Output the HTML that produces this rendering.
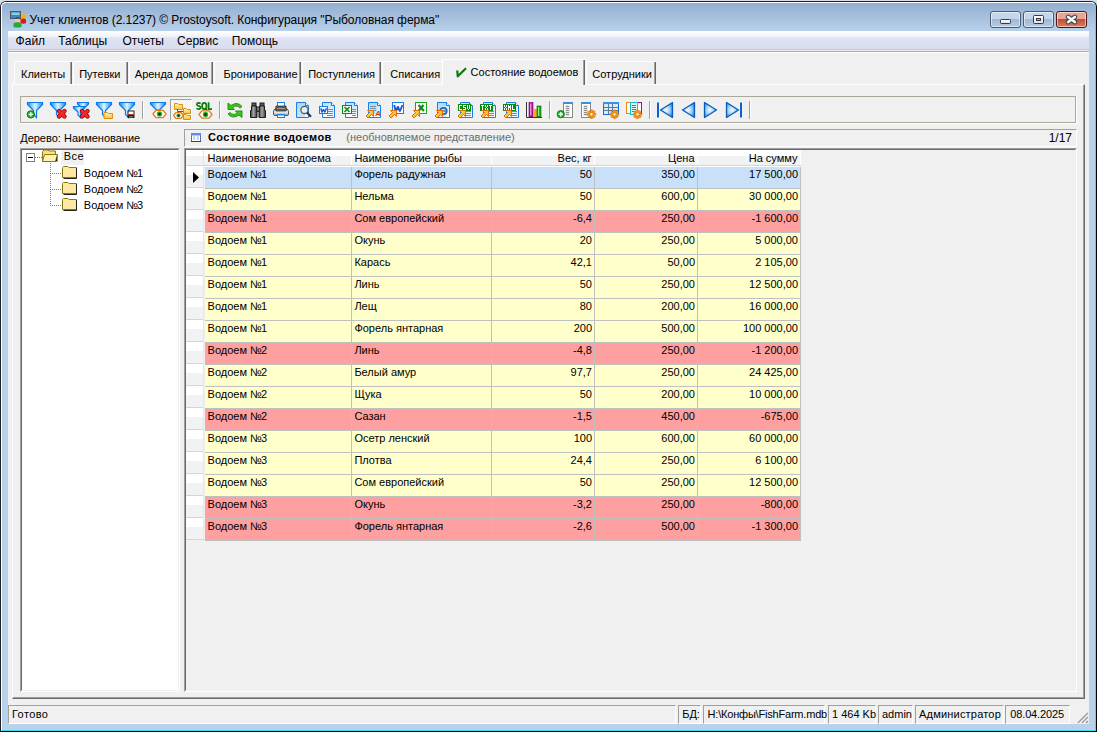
<!DOCTYPE html><html><head><meta charset="utf-8"><style>
*{margin:0;padding:0;box-sizing:border-box}
html,body{width:1097px;height:732px;overflow:hidden;background:#d5deea;font-family:"Liberation Sans",sans-serif;font-size:11px;color:#000}
.a{position:absolute}
.t{position:absolute;white-space:pre;line-height:13px}
svg{position:absolute;overflow:visible}
</style></head><body><div class="a" style="left:0;top:1px;width:1097px;height:731px;background:#b9d1ea;border-radius:6px 6px 0 0;overflow:hidden">
</div>
<div class="a" style="left:2px;top:3px;width:1093px;height:28px;background:linear-gradient(#93afd0,#b8d0ea);border-radius:4px 4px 0 0"></div>
<div class="a" style="left:0;top:1px;width:1097px;height:731px;border:1px solid #222;border-right-color:#000;border-bottom-color:#000;border-radius:6px 6px 0 0"></div>
<div class="a" style="left:1px;top:2px;width:1095px;height:729px;border:1px solid #fdfdfd;border-right-color:#3ae0f0;border-bottom-color:#3ae0f0;border-radius:5px 5px 0 0;border-right-width:1px"></div>
<div class="a" style="left:8px;top:31px;width:1081px;height:693px;background:#f0f0f0"></div>
<div class="a" style="left:8px;top:31px;width:1081px;height:18px;background:linear-gradient(#ffffff 0px,#fbfbfd 2px,#eef0f8 6px,#dfe3f2 7px,#d8ddf0 18px)"></div>
<div class="a" style="left:8px;top:49px;width:1081px;height:1px;background:#bfc6da"></div>
<div class="a" style="left:8px;top:51px;width:1081px;height:1px;background:#aca899"></div>
<div class="a" style="left:8px;top:52px;width:1081px;height:1px;background:#ffffff"></div>
<div class="t" style="left:29.5px;top:13px;font-size:12px;line-height:15px;color:#000;letter-spacing:-0.06px">Учет клиентов (2.1237) © Prostoysoft. Конфигурация "Рыболовная ферма"</div>
<div class="t" style="left:15.6px;top:34px;font-size:12px;line-height:15px">Файл</div>
<div class="t" style="left:58.2px;top:34px;font-size:12px;line-height:15px">Таблицы</div>
<div class="t" style="left:122.5px;top:34px;font-size:12px;line-height:15px">Отчеты</div>
<div class="t" style="left:177.1px;top:34px;font-size:12px;line-height:15px">Сервис</div>
<div class="t" style="left:231.7px;top:34px;font-size:12px;line-height:15px">Помощь</div>
<div class="a" style="left:12px;top:84px;width:1073px;height:615px;border-left:1px solid #fff;border-top:1px solid #fff;border-right:1px solid #696969;border-bottom:1px solid #696969"></div>
<div class="a" style="left:13px;top:85px;width:1071px;height:613px;border-right:1px solid #a0a0a0;border-bottom:1px solid #a0a0a0"></div>
<div class="a" style="left:14px;top:61px;width:58px;height:23px;border-left:1px solid #fff;border-top:1px solid #fff"></div>
<div class="a" style="left:71px;top:62px;width:1px;height:22px;background:#696969"></div>
<div class="a" style="left:70px;top:62px;width:1px;height:22px;background:#a0a0a0"></div>
<div class="t" style="left:21px;top:68px">Клиенты</div>
<div class="a" style="left:73px;top:61px;width:55px;height:23px;border-left:1px solid #fff;border-top:1px solid #fff"></div>
<div class="a" style="left:127px;top:62px;width:1px;height:22px;background:#696969"></div>
<div class="a" style="left:126px;top:62px;width:1px;height:22px;background:#a0a0a0"></div>
<div class="t" style="left:79.2px;top:68px">Путевки</div>
<div class="a" style="left:129px;top:61px;width:84px;height:23px;border-left:1px solid #fff;border-top:1px solid #fff"></div>
<div class="a" style="left:212px;top:62px;width:1px;height:22px;background:#696969"></div>
<div class="a" style="left:211px;top:62px;width:1px;height:22px;background:#a0a0a0"></div>
<div class="t" style="left:134.8px;top:68px">Аренда домов</div>
<div class="a" style="left:214px;top:61px;width:87px;height:23px;border-left:1px solid #fff;border-top:1px solid #fff"></div>
<div class="a" style="left:300px;top:62px;width:1px;height:22px;background:#696969"></div>
<div class="a" style="left:299px;top:62px;width:1px;height:22px;background:#a0a0a0"></div>
<div class="t" style="left:223.5px;top:68px">Бронирование</div>
<div class="a" style="left:302px;top:61px;width:79px;height:23px;border-left:1px solid #fff;border-top:1px solid #fff"></div>
<div class="a" style="left:380px;top:62px;width:1px;height:22px;background:#696969"></div>
<div class="a" style="left:379px;top:62px;width:1px;height:22px;background:#a0a0a0"></div>
<div class="t" style="left:308.2px;top:68px">Поступления</div>
<div class="a" style="left:382px;top:61px;width:60px;height:23px;border-left:1px solid #fff;border-top:1px solid #fff"></div>
<div class="t" style="left:390.3px;top:68px">Списания</div>
<div class="a" style="left:586px;top:61px;width:70px;height:23px;border-left:1px solid #fff;border-top:1px solid #fff"></div>
<div class="a" style="left:655px;top:62px;width:1px;height:22px;background:#696969"></div>
<div class="a" style="left:654px;top:62px;width:1px;height:22px;background:#a0a0a0"></div>
<div class="t" style="left:592.3px;top:68px">Сотрудники</div>
<div class="a" style="left:442px;top:59px;width:143px;height:27px;background:#f0f0f0;border-top:1px solid #fff"></div>
<div class="a" style="left:442px;top:60px;width:1px;height:25px;background:#fff"></div>
<div class="a" style="left:584px;top:60px;width:1px;height:25px;background:#696969"></div>
<div class="a" style="left:583px;top:60px;width:1px;height:25px;background:#a0a0a0"></div>
<div class="t" style="left:470.6px;top:66px">Состояние водоемов</div>
<svg style="left:455px;top:67px" width="12" height="12" viewBox="0 0 12 12"><path d="M2.2 3.5 L2.8 9.3 L11 1.2" fill="none" stroke="#0a7a0a" stroke-width="2.2" stroke-linejoin="round"/></svg>
<div class="a" style="left:20px;top:96px;width:1057px;height:28px;border:1px solid #fff"></div>
<div class="a" style="left:20px;top:96px;width:1056px;height:27px;border:1px solid #aca899"></div>
<div class="t" style="left:20.2px;top:132px">Дерево: Наименование</div>
<div class="a" style="left:20px;top:148px;width:160px;height:544px;background:#fff;border-left:1px solid #a0a0a0;border-top:1px solid #a0a0a0;border-right:1px solid #fff;border-bottom:1px solid #fff"></div>
<div class="a" style="left:21px;top:149px;width:158px;height:542px;border-left:1px solid #696969;border-top:1px solid #696969;border-right:1px solid #f0f0f0;border-bottom:1px solid #f0f0f0"></div>
<div class="a" style="left:184px;top:129px;width:893px;height:18px;border-left:1px solid #a0a0a0;border-top:1px solid #a0a0a0;border-right:1px solid #fff;border-bottom:1px solid #fff"></div>
<div class="t" style="left:207.9px;top:131px;font-weight:bold;letter-spacing:0.45px">Состояние водоемов</div>
<div class="t" style="left:346.3px;top:131px;color:#6d6d6d">(необновляемое представление)</div>
<div class="t" style="right:25px;top:131px;font-size:12px;line-height:15px">1/17</div>
<div class="a" style="left:184px;top:148px;width:893px;height:544px;background:#f0f0f0;border-left:1px solid #a0a0a0;border-top:1px solid #a0a0a0;border-right:1px solid #fff;border-bottom:1px solid #fff"></div>
<div class="a" style="left:185px;top:149px;width:891px;height:542px;border-left:1px solid #696969;border-top:1px solid #696969;border-right:1px solid #f0f0f0;border-bottom:1px solid #f0f0f0"></div>
<div class="a" style="left:8px;top:705px;width:668px;height:19px;border-left:1px solid #a0a0a0;border-top:1px solid #a0a0a0;border-right:1px solid #fff;border-bottom:1px solid #fff"></div>
<div class="t" style="left:12px;top:708px;letter-spacing:0.4px">Готово</div>
<div class="a" style="left:678px;top:705px;width:23px;height:19px;border-left:1px solid #a0a0a0;border-top:1px solid #a0a0a0;border-right:1px solid #fff;border-bottom:1px solid #fff"></div>
<div class="t" style="left:682.2px;top:708px;letter-spacing:0">БД:</div>
<div class="a" style="left:703px;top:705px;width:122px;height:19px;border-left:1px solid #a0a0a0;border-top:1px solid #a0a0a0;border-right:1px solid #fff;border-bottom:1px solid #fff"></div>
<div class="t" style="left:707.6px;top:708px;letter-spacing:-0.2px">H:\Конфы\FishFarm.mdb</div>
<div class="a" style="left:828px;top:705px;width:48px;height:19px;border-left:1px solid #a0a0a0;border-top:1px solid #a0a0a0;border-right:1px solid #fff;border-bottom:1px solid #fff"></div>
<div class="t" style="left:832px;top:708px;letter-spacing:0">1 464 Kb</div>
<div class="a" style="left:878px;top:705px;width:35px;height:19px;border-left:1px solid #a0a0a0;border-top:1px solid #a0a0a0;border-right:1px solid #fff;border-bottom:1px solid #fff"></div>
<div class="t" style="left:882px;top:708px;letter-spacing:0">admin</div>
<div class="a" style="left:915px;top:705px;width:89px;height:19px;border-left:1px solid #a0a0a0;border-top:1px solid #a0a0a0;border-right:1px solid #fff;border-bottom:1px solid #fff"></div>
<div class="t" style="left:919px;top:708px;letter-spacing:0.2px">Администратор</div>
<div class="a" style="left:1005px;top:705px;width:65px;height:19px;border-left:1px solid #a0a0a0;border-top:1px solid #a0a0a0;border-right:1px solid #fff;border-bottom:1px solid #fff"></div>
<div class="t" style="left:1010.3px;top:708px;letter-spacing:-0.15px">08.04.2025</div>
<div class="a" style="left:186px;top:150px;width:615px;height:15px;background:linear-gradient(#ffffff 0,#ffffff 6px,#f1f2f4 6px,#f1f2f4 15px)"></div>
<div class="a" style="left:186px;top:165px;width:615px;height:1px;background:#d5d5d5"></div>
<div class="a" style="left:205px;top:166px;width:596px;height:1px;background:#ffffff"></div>
<div class="a" style="left:186px;top:166px;width:18px;height:21px;background:linear-gradient(#ffffff 0,#ffffff 9px,#f1f2f4 9px,#f1f2f4 21px)"></div>
<div class="a" style="left:186px;top:187px;width:18px;height:1px;background:#d5d5d5"></div>
<div class="a" style="left:186px;top:188px;width:18px;height:21px;background:linear-gradient(#ffffff 0,#ffffff 9px,#f1f2f4 9px,#f1f2f4 21px)"></div>
<div class="a" style="left:186px;top:209px;width:18px;height:1px;background:#d5d5d5"></div>
<div class="a" style="left:186px;top:210px;width:18px;height:21px;background:linear-gradient(#ffffff 0,#ffffff 9px,#f1f2f4 9px,#f1f2f4 21px)"></div>
<div class="a" style="left:186px;top:231px;width:18px;height:1px;background:#d5d5d5"></div>
<div class="a" style="left:186px;top:232px;width:18px;height:21px;background:linear-gradient(#ffffff 0,#ffffff 9px,#f1f2f4 9px,#f1f2f4 21px)"></div>
<div class="a" style="left:186px;top:253px;width:18px;height:1px;background:#d5d5d5"></div>
<div class="a" style="left:186px;top:254px;width:18px;height:21px;background:linear-gradient(#ffffff 0,#ffffff 9px,#f1f2f4 9px,#f1f2f4 21px)"></div>
<div class="a" style="left:186px;top:275px;width:18px;height:1px;background:#d5d5d5"></div>
<div class="a" style="left:186px;top:276px;width:18px;height:21px;background:linear-gradient(#ffffff 0,#ffffff 9px,#f1f2f4 9px,#f1f2f4 21px)"></div>
<div class="a" style="left:186px;top:297px;width:18px;height:1px;background:#d5d5d5"></div>
<div class="a" style="left:186px;top:298px;width:18px;height:21px;background:linear-gradient(#ffffff 0,#ffffff 9px,#f1f2f4 9px,#f1f2f4 21px)"></div>
<div class="a" style="left:186px;top:319px;width:18px;height:1px;background:#d5d5d5"></div>
<div class="a" style="left:186px;top:320px;width:18px;height:21px;background:linear-gradient(#ffffff 0,#ffffff 9px,#f1f2f4 9px,#f1f2f4 21px)"></div>
<div class="a" style="left:186px;top:341px;width:18px;height:1px;background:#d5d5d5"></div>
<div class="a" style="left:186px;top:342px;width:18px;height:21px;background:linear-gradient(#ffffff 0,#ffffff 9px,#f1f2f4 9px,#f1f2f4 21px)"></div>
<div class="a" style="left:186px;top:363px;width:18px;height:1px;background:#d5d5d5"></div>
<div class="a" style="left:186px;top:364px;width:18px;height:21px;background:linear-gradient(#ffffff 0,#ffffff 9px,#f1f2f4 9px,#f1f2f4 21px)"></div>
<div class="a" style="left:186px;top:385px;width:18px;height:1px;background:#d5d5d5"></div>
<div class="a" style="left:186px;top:386px;width:18px;height:21px;background:linear-gradient(#ffffff 0,#ffffff 9px,#f1f2f4 9px,#f1f2f4 21px)"></div>
<div class="a" style="left:186px;top:407px;width:18px;height:1px;background:#d5d5d5"></div>
<div class="a" style="left:186px;top:408px;width:18px;height:21px;background:linear-gradient(#ffffff 0,#ffffff 9px,#f1f2f4 9px,#f1f2f4 21px)"></div>
<div class="a" style="left:186px;top:429px;width:18px;height:1px;background:#d5d5d5"></div>
<div class="a" style="left:186px;top:430px;width:18px;height:21px;background:linear-gradient(#ffffff 0,#ffffff 9px,#f1f2f4 9px,#f1f2f4 21px)"></div>
<div class="a" style="left:186px;top:451px;width:18px;height:1px;background:#d5d5d5"></div>
<div class="a" style="left:186px;top:452px;width:18px;height:21px;background:linear-gradient(#ffffff 0,#ffffff 9px,#f1f2f4 9px,#f1f2f4 21px)"></div>
<div class="a" style="left:186px;top:473px;width:18px;height:1px;background:#d5d5d5"></div>
<div class="a" style="left:186px;top:474px;width:18px;height:21px;background:linear-gradient(#ffffff 0,#ffffff 9px,#f1f2f4 9px,#f1f2f4 21px)"></div>
<div class="a" style="left:186px;top:495px;width:18px;height:1px;background:#d5d5d5"></div>
<div class="a" style="left:186px;top:496px;width:18px;height:21px;background:linear-gradient(#ffffff 0,#ffffff 9px,#f1f2f4 9px,#f1f2f4 21px)"></div>
<div class="a" style="left:186px;top:517px;width:18px;height:1px;background:#d5d5d5"></div>
<div class="a" style="left:186px;top:518px;width:18px;height:21px;background:linear-gradient(#ffffff 0,#ffffff 9px,#f1f2f4 9px,#f1f2f4 21px)"></div>
<div class="a" style="left:186px;top:539px;width:18px;height:1px;background:#d5d5d5"></div>
<div class="a" style="left:205px;top:167px;width:595px;height:21px;background:#c8e1f9"></div>
<div class="a" style="left:205px;top:188px;width:596px;height:1px;background:#c0c0c0"></div>
<div class="a" style="left:205px;top:189px;width:595px;height:21px;background:#ffffcc"></div>
<div class="a" style="left:205px;top:210px;width:596px;height:1px;background:#c0c0c0"></div>
<div class="a" style="left:205px;top:211px;width:595px;height:21px;background:#ffa0a0"></div>
<div class="a" style="left:205px;top:232px;width:596px;height:1px;background:#c0c0c0"></div>
<div class="a" style="left:205px;top:233px;width:595px;height:21px;background:#ffffcc"></div>
<div class="a" style="left:205px;top:254px;width:596px;height:1px;background:#c0c0c0"></div>
<div class="a" style="left:205px;top:255px;width:595px;height:21px;background:#ffffcc"></div>
<div class="a" style="left:205px;top:276px;width:596px;height:1px;background:#c0c0c0"></div>
<div class="a" style="left:205px;top:277px;width:595px;height:21px;background:#ffffcc"></div>
<div class="a" style="left:205px;top:298px;width:596px;height:1px;background:#c0c0c0"></div>
<div class="a" style="left:205px;top:299px;width:595px;height:21px;background:#ffffcc"></div>
<div class="a" style="left:205px;top:320px;width:596px;height:1px;background:#c0c0c0"></div>
<div class="a" style="left:205px;top:321px;width:595px;height:21px;background:#ffffcc"></div>
<div class="a" style="left:205px;top:342px;width:596px;height:1px;background:#c0c0c0"></div>
<div class="a" style="left:205px;top:343px;width:595px;height:21px;background:#ffa0a0"></div>
<div class="a" style="left:205px;top:364px;width:596px;height:1px;background:#c0c0c0"></div>
<div class="a" style="left:205px;top:365px;width:595px;height:21px;background:#ffffcc"></div>
<div class="a" style="left:205px;top:386px;width:596px;height:1px;background:#c0c0c0"></div>
<div class="a" style="left:205px;top:387px;width:595px;height:21px;background:#ffffcc"></div>
<div class="a" style="left:205px;top:408px;width:596px;height:1px;background:#c0c0c0"></div>
<div class="a" style="left:205px;top:409px;width:595px;height:21px;background:#ffa0a0"></div>
<div class="a" style="left:205px;top:430px;width:596px;height:1px;background:#c0c0c0"></div>
<div class="a" style="left:205px;top:431px;width:595px;height:21px;background:#ffffcc"></div>
<div class="a" style="left:205px;top:452px;width:596px;height:1px;background:#c0c0c0"></div>
<div class="a" style="left:205px;top:453px;width:595px;height:21px;background:#ffffcc"></div>
<div class="a" style="left:205px;top:474px;width:596px;height:1px;background:#c0c0c0"></div>
<div class="a" style="left:205px;top:475px;width:595px;height:21px;background:#ffffcc"></div>
<div class="a" style="left:205px;top:496px;width:596px;height:1px;background:#c0c0c0"></div>
<div class="a" style="left:205px;top:497px;width:595px;height:21px;background:#ffa0a0"></div>
<div class="a" style="left:205px;top:518px;width:596px;height:1px;background:#c0c0c0"></div>
<div class="a" style="left:205px;top:519px;width:595px;height:21px;background:#ffa0a0"></div>
<div class="a" style="left:205px;top:540px;width:596px;height:1px;background:#c0c0c0"></div>
<div class="a" style="left:203px;top:150px;width:1px;height:389px;background:#e6e6e6"></div>
<div class="a" style="left:351px;top:150px;width:1px;height:15px;background:#ffffff"></div>
<div class="a" style="left:351px;top:167px;width:1px;height:374px;background:#c0c0c0"></div>
<div class="a" style="left:491px;top:150px;width:1px;height:15px;background:#ffffff"></div>
<div class="a" style="left:491px;top:167px;width:1px;height:374px;background:#c0c0c0"></div>
<div class="a" style="left:594px;top:150px;width:1px;height:15px;background:#ffffff"></div>
<div class="a" style="left:594px;top:167px;width:1px;height:374px;background:#c0c0c0"></div>
<div class="a" style="left:697px;top:150px;width:1px;height:15px;background:#ffffff"></div>
<div class="a" style="left:697px;top:167px;width:1px;height:374px;background:#c0c0c0"></div>
<div class="a" style="left:800px;top:150px;width:1px;height:15px;background:#ffffff"></div>
<div class="a" style="left:800px;top:167px;width:1px;height:374px;background:#c0c0c0"></div>
<div class="t" style="left:207.6px;top:151.6px">Наименование водоема</div>
<div class="t" style="left:354.4px;top:151.6px">Наименование рыбы</div>
<div class="t" style="right:505.5px;top:151.6px">Вес, кг</div>
<div class="t" style="right:402.5px;top:151.6px">Цена</div>
<div class="t" style="right:299.5px;top:151.6px">На сумму</div>
<div class="t" style="left:207.6px;top:167.5px">Водоем <span style=letter-spacing:-1px>№</span>1</div>
<div class="t" style="left:354.4px;top:167.5px">Форель радужная</div>
<div class="t" style="right:505px;top:167.5px">50</div>
<div class="t" style="right:402px;top:167.5px">350,00</div>
<div class="t" style="right:299px;top:167.5px">17 500,00</div>
<div class="t" style="left:207.6px;top:189.5px">Водоем <span style=letter-spacing:-1px>№</span>1</div>
<div class="t" style="left:354.4px;top:189.5px">Нельма</div>
<div class="t" style="right:505px;top:189.5px">50</div>
<div class="t" style="right:402px;top:189.5px">600,00</div>
<div class="t" style="right:299px;top:189.5px">30 000,00</div>
<div class="t" style="left:207.6px;top:211.5px">Водоем <span style=letter-spacing:-1px>№</span>1</div>
<div class="t" style="left:354.4px;top:211.5px">Сом европейский</div>
<div class="t" style="right:505px;top:211.5px">-6,4</div>
<div class="t" style="right:402px;top:211.5px">250,00</div>
<div class="t" style="right:299px;top:211.5px">-1 600,00</div>
<div class="t" style="left:207.6px;top:233.5px">Водоем <span style=letter-spacing:-1px>№</span>1</div>
<div class="t" style="left:354.4px;top:233.5px">Окунь</div>
<div class="t" style="right:505px;top:233.5px">20</div>
<div class="t" style="right:402px;top:233.5px">250,00</div>
<div class="t" style="right:299px;top:233.5px">5 000,00</div>
<div class="t" style="left:207.6px;top:255.5px">Водоем <span style=letter-spacing:-1px>№</span>1</div>
<div class="t" style="left:354.4px;top:255.5px">Карась</div>
<div class="t" style="right:505px;top:255.5px">42,1</div>
<div class="t" style="right:402px;top:255.5px">50,00</div>
<div class="t" style="right:299px;top:255.5px">2 105,00</div>
<div class="t" style="left:207.6px;top:277.5px">Водоем <span style=letter-spacing:-1px>№</span>1</div>
<div class="t" style="left:354.4px;top:277.5px">Линь</div>
<div class="t" style="right:505px;top:277.5px">50</div>
<div class="t" style="right:402px;top:277.5px">250,00</div>
<div class="t" style="right:299px;top:277.5px">12 500,00</div>
<div class="t" style="left:207.6px;top:299.5px">Водоем <span style=letter-spacing:-1px>№</span>1</div>
<div class="t" style="left:354.4px;top:299.5px">Лещ</div>
<div class="t" style="right:505px;top:299.5px">80</div>
<div class="t" style="right:402px;top:299.5px">200,00</div>
<div class="t" style="right:299px;top:299.5px">16 000,00</div>
<div class="t" style="left:207.6px;top:321.5px">Водоем <span style=letter-spacing:-1px>№</span>1</div>
<div class="t" style="left:354.4px;top:321.5px">Форель янтарная</div>
<div class="t" style="right:505px;top:321.5px">200</div>
<div class="t" style="right:402px;top:321.5px">500,00</div>
<div class="t" style="right:299px;top:321.5px">100 000,00</div>
<div class="t" style="left:207.6px;top:343.5px">Водоем <span style=letter-spacing:-1px>№</span>2</div>
<div class="t" style="left:354.4px;top:343.5px">Линь</div>
<div class="t" style="right:505px;top:343.5px">-4,8</div>
<div class="t" style="right:402px;top:343.5px">250,00</div>
<div class="t" style="right:299px;top:343.5px">-1 200,00</div>
<div class="t" style="left:207.6px;top:365.5px">Водоем <span style=letter-spacing:-1px>№</span>2</div>
<div class="t" style="left:354.4px;top:365.5px">Белый амур</div>
<div class="t" style="right:505px;top:365.5px">97,7</div>
<div class="t" style="right:402px;top:365.5px">250,00</div>
<div class="t" style="right:299px;top:365.5px">24 425,00</div>
<div class="t" style="left:207.6px;top:387.5px">Водоем <span style=letter-spacing:-1px>№</span>2</div>
<div class="t" style="left:354.4px;top:387.5px">Щука</div>
<div class="t" style="right:505px;top:387.5px">50</div>
<div class="t" style="right:402px;top:387.5px">200,00</div>
<div class="t" style="right:299px;top:387.5px">10 000,00</div>
<div class="t" style="left:207.6px;top:409.5px">Водоем <span style=letter-spacing:-1px>№</span>2</div>
<div class="t" style="left:354.4px;top:409.5px">Сазан</div>
<div class="t" style="right:505px;top:409.5px">-1,5</div>
<div class="t" style="right:402px;top:409.5px">450,00</div>
<div class="t" style="right:299px;top:409.5px">-675,00</div>
<div class="t" style="left:207.6px;top:431.5px">Водоем <span style=letter-spacing:-1px>№</span>3</div>
<div class="t" style="left:354.4px;top:431.5px">Осетр ленский</div>
<div class="t" style="right:505px;top:431.5px">100</div>
<div class="t" style="right:402px;top:431.5px">600,00</div>
<div class="t" style="right:299px;top:431.5px">60 000,00</div>
<div class="t" style="left:207.6px;top:453.5px">Водоем <span style=letter-spacing:-1px>№</span>3</div>
<div class="t" style="left:354.4px;top:453.5px">Плотва</div>
<div class="t" style="right:505px;top:453.5px">24,4</div>
<div class="t" style="right:402px;top:453.5px">250,00</div>
<div class="t" style="right:299px;top:453.5px">6 100,00</div>
<div class="t" style="left:207.6px;top:475.5px">Водоем <span style=letter-spacing:-1px>№</span>3</div>
<div class="t" style="left:354.4px;top:475.5px">Сом европейский</div>
<div class="t" style="right:505px;top:475.5px">50</div>
<div class="t" style="right:402px;top:475.5px">250,00</div>
<div class="t" style="right:299px;top:475.5px">12 500,00</div>
<div class="t" style="left:207.6px;top:497.5px">Водоем <span style=letter-spacing:-1px>№</span>3</div>
<div class="t" style="left:354.4px;top:497.5px">Окунь</div>
<div class="t" style="right:505px;top:497.5px">-3,2</div>
<div class="t" style="right:402px;top:497.5px">250,00</div>
<div class="t" style="right:299px;top:497.5px">-800,00</div>
<div class="t" style="left:207.6px;top:519.5px">Водоем <span style=letter-spacing:-1px>№</span>3</div>
<div class="t" style="left:354.4px;top:519.5px">Форель янтарная</div>
<div class="t" style="right:505px;top:519.5px">-2,6</div>
<div class="t" style="right:402px;top:519.5px">500,00</div>
<div class="t" style="right:299px;top:519.5px">-1 300,00</div>
<svg style="left:193px;top:172px" width="7" height="12" viewBox="0 0 7 12"><path d="M0 0 L6 5.5 L0 11 Z" fill="#000"/></svg>
<div class="a" style="left:990px;top:11px;width:31px;height:17px;border:1px solid #4e5a6e;border-radius:3px;background:linear-gradient(#c4d6eb 0,#c4d6eb 7px,#9fb8d5 7px,#b5cbe4 15px);box-shadow:inset 0 0 0 1px rgba(255,255,255,0.55)"></div>
<div class="a" style="left:1023px;top:11px;width:31px;height:17px;border:1px solid #4e5a6e;border-radius:3px;background:linear-gradient(#c4d6eb 0,#c4d6eb 7px,#9fb8d5 7px,#b5cbe4 15px);box-shadow:inset 0 0 0 1px rgba(255,255,255,0.55)"></div>
<div class="a" style="left:1056px;top:11px;width:31px;height:17px;border:1px solid #481620;border-radius:3px;background:linear-gradient(#e9a493 0,#e9a493 7px,#c4492b 7px,#dc7d62 15px);box-shadow:inset 0 0 0 1px rgba(255,255,255,0.55)"></div>
<div class="a" style="left:1000px;top:19px;width:11px;height:5px;background:linear-gradient(#ffffff,#e2e2e2);border:1px solid #333a48;border-radius:1.5px"></div>
<div class="a" style="left:1033px;top:15px;width:11px;height:9px;background:linear-gradient(#ffffff,#e2e2e2);border:1px solid #333a48;border-radius:1.5px"></div>
<div class="a" style="left:1036px;top:18px;width:5px;height:3px;background:#9fbad6;border:1px solid #333a48"></div>
<svg style="left:1065px;top:14px" width="13" height="11" viewBox="0 0 13 11"><path d="M3.2 3 L9.8 8 M9.8 3 L3.2 8" stroke="#3b4256" stroke-width="4.8" stroke-linecap="round"/><path d="M3.2 3 L9.8 8 M9.8 3 L3.2 8" stroke="#f6f6f6" stroke-width="2.8" stroke-linecap="round"/></svg>
<svg style="left:10px;top:11px" width="17" height="17" viewBox="0 0 17 17">
<rect x="0.5" y="0.5" width="10" height="7" fill="#3a86d8" stroke="#555" stroke-width="1"/>
<rect x="1.5" y="1.5" width="8" height="2.5" fill="#7fd0e8"/>
<circle cx="13.5" cy="5.5" r="2.6" fill="#f0b020"/>
<path d="M10.5 8.5 Q13.5 6.5 16 8.5 L16 12 Q13.5 13.5 10.5 12 Z" fill="#d81c1c"/>
<circle cx="7.5" cy="9" r="2.6" fill="#f3c8a0"/>
<path d="M5 7.5 Q7.5 5 10 7.5 L9.5 8 Q7.5 7 5.5 8 Z" fill="#222"/>
<path d="M3.5 12.5 Q7.5 10 11.5 12.5 L11.5 16 Q7.5 17 3.5 16 Z" fill="#22aa33"/>
</svg>
<svg style="left:1077px;top:712px" width="12" height="12" viewBox="0 0 12 12">
<path d="M11 1 L1 11 M11 5 L5 11 M11 9 L9 11" stroke="#9a9a9a" stroke-width="1.6"/>
<path d="M11.8 1.8 L1.8 11.8 M11.8 5.8 L5.8 11.8" stroke="#fff" stroke-width="0.8"/>
</svg>
<svg style="left:191px;top:133px" width="10" height="9" viewBox="0 0 10 9">
<rect x="0.5" y="0.5" width="9" height="8" fill="#fff" stroke="#4d74b8" stroke-width="1"/>
<rect x="0" y="0" width="10" height="2.5" fill="#5b8ee6"/>
<rect x="0" y="8" width="10" height="1" fill="#2c4474"/>
<path d="M2 4 H4.3 M5.7 4 H8 M2 6 H4.3 M5.7 6 H8" stroke="#9fb0d0" stroke-width="1"/>
</svg>
<svg width="0" height="0" style="position:absolute">
<defs>
<linearGradient id="gf" x1="0" y1="0" x2="1" y2="0"><stop offset="0" stop-color="#1a8cf0"/><stop offset="0.5" stop-color="#def4ff"/><stop offset="1" stop-color="#1a8cf0"/></linearGradient>
<linearGradient id="gdoc" x1="0" y1="0" x2="0" y2="1"><stop offset="0" stop-color="#bfe0fa"/><stop offset="1" stop-color="#ffffff"/></linearGradient>
<radialGradient id="gred" cx="0.4" cy="0.35" r="0.7"><stop offset="0" stop-color="#ff9a9a"/><stop offset="0.5" stop-color="#f01818"/><stop offset="1" stop-color="#a00000"/></radialGradient>
<linearGradient id="gfold" x1="0" y1="0" x2="0" y2="1"><stop offset="0" stop-color="#fff4b8"/><stop offset="1" stop-color="#f7c23a"/></linearGradient>
<linearGradient id="garr" x1="0" y1="0" x2="1" y2="1"><stop offset="0" stop-color="#ffe860"/><stop offset="1" stop-color="#f8a010"/></linearGradient>
<linearGradient id="gprn" x1="0" y1="0" x2="0" y2="1"><stop offset="0" stop-color="#f8f8f8"/><stop offset="0.6" stop-color="#e0e0e0"/><stop offset="1" stop-color="#8a8a8a"/></linearGradient>
<linearGradient id="gbin" x1="0" y1="0" x2="1" y2="0"><stop offset="0" stop-color="#303030"/><stop offset="0.45" stop-color="#a8a8a8"/><stop offset="1" stop-color="#303030"/></linearGradient>
<radialGradient id="gnav" cx="0.45" cy="0.5" r="0.6"><stop offset="0" stop-color="#f4fbff"/><stop offset="0.55" stop-color="#9dd2f8"/><stop offset="1" stop-color="#2a8ae0"/></radialGradient>
</defs></svg>
<svg style="left:27px;top:102px" width="16" height="16" viewBox="0 0 16 16"><path d="M0.5 0.5 H15.5 V2.5 L9.5 8.5 V15.5 L6.5 12.5 V8.5 L0.5 2.5 Z" fill="url(#gf)" stroke="#0a7ae8" stroke-width="1.2"/><circle cx="3.8" cy="12.4" r="3.6" fill="#18c018" stroke="#0a7a0a" stroke-width="1"/><path d="M1.5999999999999996 12.4 H6.0 M3.8 10.2 V14.600000000000001" stroke="#fff" stroke-width="1.4"/></svg>
<svg style="left:50px;top:102px" width="16" height="16" viewBox="0 0 16 16"><path d="M0.5 0.5 H15.5 V2.5 L9.5 8.5 V15.5 L6.5 12.5 V8.5 L0.5 2.5 Z" fill="url(#gf)" stroke="#0a7ae8" stroke-width="1.2"/><path d="M9 9 L14.5 14.5 M14.5 9 L9 14.5" stroke="#a00000" stroke-width="4.4" stroke-linecap="round"/><path d="M9 9 L14.5 14.5 M14.5 9 L9 14.5" stroke="#f42a2a" stroke-width="2.6" stroke-linecap="round"/></svg>
<svg style="left:73px;top:102px" width="16" height="16" viewBox="0 0 16 16"><path d="M4.5 0.5 H15.5 V2 L11 6.5 H9 L4.5 2 Z" fill="url(#gf)" stroke="#0a7ae8" stroke-width="1.2"/><path d="M0.5 4.5 H11.5 V6 L7.5 10 V15.5 L5 13 V10 L0.5 6 Z" fill="url(#gf)" stroke="#0a7ae8" stroke-width="1.2"/><path d="M9 9 L14.5 14.5 M14.5 9 L9 14.5" stroke="#a00000" stroke-width="4.4" stroke-linecap="round"/><path d="M9 9 L14.5 14.5 M14.5 9 L9 14.5" stroke="#f42a2a" stroke-width="2.6" stroke-linecap="round"/></svg>
<svg style="left:96px;top:102px" width="16" height="16" viewBox="0 0 16 16"><path d="M0.5 0.5 H15.5 V2.5 L9.5 8.5 V15.5 L6.5 12.5 V8.5 L0.5 2.5 Z" fill="url(#gf)" stroke="#0a7ae8" stroke-width="1.2"/><path d="M8.0 10.5 h3.4000000000000004 l1 1 h4.1 v5 h-8.5 z" fill="url(#gfold)" stroke="#e09010" stroke-width="1"/></svg>
<svg style="left:119px;top:102px" width="16" height="16" viewBox="0 0 16 16"><path d="M0.5 0.5 H15.5 V2.5 L9.5 8.5 V15.5 L6.5 12.5 V8.5 L0.5 2.5 Z" fill="url(#gf)" stroke="#0a7ae8" stroke-width="1.2"/><rect x="8.5" y="8.5" width="7" height="7.5" fill="#222" /><rect x="9.5" y="9.5" width="5" height="3" fill="#fff"/><rect x="9.5" y="12" width="5" height="1" fill="#c83010"/><rect x="10.5" y="14" width="1" height="1.5" fill="#bbb"/><rect x="12.5" y="14" width="1" height="1.5" fill="#bbb"/></svg>
<div class="a" style="left:142px;top:101px;width:1px;height:18px;background:#a0a0a0"></div><div class="a" style="left:143px;top:101px;width:1px;height:18px;background:#fff"></div>
<div class="a" style="left:219px;top:101px;width:1px;height:18px;background:#a0a0a0"></div><div class="a" style="left:220px;top:101px;width:1px;height:18px;background:#fff"></div>
<div class="a" style="left:549px;top:101px;width:1px;height:18px;background:#a0a0a0"></div><div class="a" style="left:550px;top:101px;width:1px;height:18px;background:#fff"></div>
<div class="a" style="left:649px;top:101px;width:1px;height:18px;background:#a0a0a0"></div><div class="a" style="left:650px;top:101px;width:1px;height:18px;background:#fff"></div>
<div class="a" style="left:749px;top:101px;width:1px;height:18px;background:#a0a0a0"></div><div class="a" style="left:750px;top:101px;width:1px;height:18px;background:#fff"></div>
<svg style="left:150px;top:102px" width="16" height="16" viewBox="0 0 16 16"><path d="M0.5 0.5 H15.5 V2 L9.5 8 H6.5 L0.5 2 Z" fill="url(#gf)" stroke="#0a7ae8" stroke-width="1.2"/><path d="M3.0 12 L5.925 8.4 H13.075 L16.0 12 L13.075 15.6 H5.925 Z" fill="#fff" stroke="#e47a1c" stroke-width="1.3" stroke-linejoin="round"/><circle cx="9.5" cy="12" r="2.7" fill="#22b422"/><circle cx="9.5" cy="12" r="1.22" fill="#1a1a1a"/></svg>
<div class="a" style="left:170px;top:99px;width:22px;height:22px;border-left:1px solid #a0a0a0;border-top:1px solid #a0a0a0;border-right:1px solid #fff;border-bottom:1px solid #fff;background:repeating-conic-gradient(#ffffff 0 25%,#ececec 0 50%) 0 0/2px 2px"></div>
<svg style="left:173px;top:101px" width="18" height="18" viewBox="0 0 18 18"><path d="M1.5 2.5 h3.2 l1 1 h3.8 v5 h-8 z" fill="url(#gfold)" stroke="#e09010" stroke-width="1"/><path d="M4.5 8 V10.5 H10" stroke="#505860" stroke-width="1" fill="none"/><path d="M10.5 7.5 h2.8000000000000003 l1 1 h3.2 v4 h-7 z" fill="url(#gfold)" stroke="#e09010" stroke-width="1"/><path d="M10.5 13.5 h2.8000000000000003 l1 1 h3.2 v4 h-7 z" fill="url(#gfold)" stroke="#e09010" stroke-width="1"/><path d="M0.7000000000000002 14.5 L2.86 11.7 H8.14 L10.3 14.5 L8.14 17.3 H2.86 Z" fill="#fff" stroke="#e47a1c" stroke-width="1.3" stroke-linejoin="round"/><circle cx="5.5" cy="14.5" r="2.1" fill="#22b422"/><circle cx="5.5" cy="14.5" r="0.95" fill="#1a1a1a"/></svg>
<svg style="left:196px;top:102px" width="17" height="16" viewBox="0 0 17 16"><g fill="none" stroke="#0a7a0a" stroke-width="1.7"><path d="M4.6 1.6 Q3.8 0.9 2.6 0.9 Q0.9 0.9 0.9 2.4 Q0.9 3.6 2.6 3.9 Q4.5 4.3 4.5 5.6 Q4.5 7.1 2.6 7.1 Q1.3 7.1 0.6 6.3"/><ellipse cx="8.3" cy="4" rx="2.2" ry="3.1"/><path d="M9.3 6.2 L11 8"/><path d="M12.6 0.2 V7.1 H16"/></g><path d="M3.0 12.5 L5.925 8.9 H13.075 L16.0 12.5 L13.075 16.1 H5.925 Z" fill="#fff" stroke="#e47a1c" stroke-width="1.3" stroke-linejoin="round"/><circle cx="9.5" cy="12.5" r="2.7" fill="#22b422"/><circle cx="9.5" cy="12.5" r="1.22" fill="#1a1a1a"/></svg>
<svg style="left:227px;top:102px" width="16" height="16" viewBox="0 0 16 16"><path d="M1 1 L1 7.5 L7.5 7.5 L5.5 5.5 Q10 2.5 13 6 L15 4.5 Q10.5 -1 4 3.5 Z" fill="#38c818" stroke="#1a8a0a" stroke-width="0.9"/><path d="M15 15.5 L15 9 L8.5 9 L10.5 11 Q6 14 3 10.5 L1 12 Q5.5 17.5 12 13 Z" fill="#38c818" stroke="#1a8a0a" stroke-width="0.9"/></svg>
<svg style="left:250px;top:102px" width="16" height="16" viewBox="0 0 16 16"><path d="M6.5 5 H9.5 V9.5 H6.5 Z" fill="#7a7a7a" stroke="#1e1e1e" stroke-width="1"/><rect x="2" y="1" width="4" height="3" fill="#5a5a5a" stroke="#1e1e1e" stroke-width="1"/><rect x="10" y="1" width="4" height="3" fill="#5a5a5a" stroke="#1e1e1e" stroke-width="1"/><path d="M1.5 4 H6.5 V8.5 H7 V15.5 H0.5 V8.5 H1.5 Z" fill="url(#gbin)" stroke="#1e1e1e" stroke-width="1" stroke-linejoin="round"/><path d="M9.5 4 H14.5 V8.5 H15.5 V15.5 H9 V8.5 H9.5 Z" fill="url(#gbin)" stroke="#1e1e1e" stroke-width="1" stroke-linejoin="round"/></svg>
<svg style="left:273px;top:102px" width="16" height="16" viewBox="0 0 16 16"><rect x="4.5" y="0.5" width="7" height="5" fill="#fff" stroke="#1480e8"/><path d="M0.5 10 Q0.5 7 2.5 7 H13.5 Q15.5 7 15.5 10 V12.5 Q15.5 13.5 14 13.5 H2 Q0.5 13.5 0.5 12.5 Z" fill="url(#gprn)" stroke="#555" stroke-width="1"/><path d="M3 4 H13 L13.5 8 Q13.5 9 12.5 9 H3.5 Q2.5 9 2.5 8 Z" fill="#5a5a5a" stroke="#3a3a3a" stroke-width="0.8"/><rect x="4" y="6" width="8" height="1" fill="#9a9a9a"/><rect x="4.5" y="12.5" width="7" height="3" fill="#fff" stroke="#1480e8"/><rect x="5" y="13" width="6" height="1" fill="#bbb"/></svg>
<svg style="left:296px;top:102px" width="16" height="16" viewBox="0 0 16 16"><path d="M0.5 0.5 H9.5 L12.5 3.5 V15.5 H0.5 Z" fill="url(#gdoc)" stroke="#1480e8" stroke-width="1"/><path d="M9.5 0.5 V3.5 H12.5" fill="#fff" stroke="#1480e8" stroke-width="1"/><rect x="1" y="1" width="8" height="14" fill="#a8d4f4" opacity="0.6"/><circle cx="8.5" cy="8" r="3.6" fill="#dff0fa" stroke="#555" stroke-width="1.2"/><path d="M11 10.5 L15 14.7" stroke="#333" stroke-width="2"/></svg>
<svg style="left:319px;top:102px" width="16" height="16" viewBox="0 0 16 16"><path d="M3.5 0.5 H12.5 L15.5 3.5 V15.5 H3.5 Z" fill="url(#gdoc)" stroke="#1480e8" stroke-width="1"/><path d="M12.5 0.5 V3.5 H15.5" fill="#fff" stroke="#1480e8" stroke-width="1"/><path d="M8 7.5 H14" stroke="#6a90b0" stroke-width="1"/><path d="M8 9.5 H14" stroke="#6a90b0" stroke-width="1"/><path d="M8 11.5 H14" stroke="#6a90b0" stroke-width="1"/><path d="M8 13.5 H14" stroke="#6a90b0" stroke-width="1"/><rect x="0.5" y="4.5" width="8" height="7" fill="#fff" stroke="#1480e8"/><path d="M1.8 6.3 L2.9 10.3 L4.5 7.3 L5.8 10.3 L7.5 6.3" fill="none" stroke="#1a5ad0" stroke-width="1.4" stroke-linejoin="bevel"/></svg>
<svg style="left:342px;top:102px" width="16" height="16" viewBox="0 0 16 16"><path d="M3.5 0.5 H12.5 L15.5 3.5 V15.5 H3.5 Z" fill="url(#gdoc)" stroke="#1480e8" stroke-width="1"/><path d="M12.5 0.5 V3.5 H15.5" fill="#fff" stroke="#1480e8" stroke-width="1"/><path d="M10 7.5 H14" stroke="#6a90b0" stroke-width="1"/><path d="M10 9.5 H14" stroke="#6a90b0" stroke-width="1"/><path d="M10 11.5 H14" stroke="#6a90b0" stroke-width="1"/><path d="M10 13.5 H14" stroke="#6a90b0" stroke-width="1"/><rect x="0.5" y="3.5" width="9" height="8" fill="#fff" stroke="#0a8a10"/><path d="M2.5 5 L7.5 10 M7.5 5 L2.5 10" stroke="#0a8a10" stroke-width="1.6"/></svg>
<svg style="left:365px;top:102px" width="16" height="16" viewBox="0 0 16 16"><path d="M3.5 0.5 H12.5 L15.5 3.5 V15.5 H3.5 Z" fill="url(#gdoc)" stroke="#1480e8" stroke-width="1"/><path d="M12.5 0.5 V3.5 H15.5" fill="#fff" stroke="#1480e8" stroke-width="1"/><rect x="4" y="1" width="8" height="11" fill="#a8d4f4" opacity="0.55"/><path d="M5 4.5 H11" stroke="#6a90b0" stroke-width="1"/><path d="M5 6.5 H11" stroke="#6a90b0" stroke-width="1"/><path d="M5 8.5 H11" stroke="#6a90b0" stroke-width="1"/><text x="13" y="13.5" font-family="Liberation Sans" font-style="italic" font-weight="bold" font-size="7.5" fill="#d03010" text-anchor="middle">A</text><path d="M2.5 8.5 H8.5 V14.5 L6.5 12.5 L3 16 L1 14 L4.5 10.5 Z" fill="url(#garr)" stroke="#e86a00" stroke-width="1" stroke-linejoin="round"/></svg>
<svg style="left:388px;top:102px" width="16" height="16" viewBox="0 0 16 16"><rect x="4.5" y="0.5" width="11" height="11" fill="#fff" stroke="#1480e8"/><path d="M6.2 3 L7.8 9.5 L10 4.5 L11.8 9.5 L14.5 3" fill="none" stroke="#1a5ad0" stroke-width="1.9" stroke-linejoin="bevel"/><path d="M2.5 8.5 H8.5 V14.5 L6.5 12.5 L3 16 L1 14 L4.5 10.5 Z" fill="url(#garr)" stroke="#e86a00" stroke-width="1" stroke-linejoin="round"/></svg>
<svg style="left:411px;top:102px" width="16" height="16" viewBox="0 0 16 16"><rect x="4.5" y="0.5" width="11" height="11" fill="#fff" stroke="#18a818"/><path d="M7.5 3 L13 9 M12.5 3 L7.5 9" stroke="#108a10" stroke-width="2.2"/><path d="M2.5 8.5 H8.5 V14.5 L6.5 12.5 L3 16 L1 14 L4.5 10.5 Z" fill="url(#garr)" stroke="#e86a00" stroke-width="1" stroke-linejoin="round"/></svg>
<svg style="left:434px;top:102px" width="16" height="16" viewBox="0 0 16 16"><path d="M3.5 0.5 H12.5 L15.5 3.5 V15.5 H3.5 Z" fill="url(#gdoc)" stroke="#1480e8" stroke-width="1"/><path d="M12.5 0.5 V3.5 H15.5" fill="#fff" stroke="#1480e8" stroke-width="1"/><rect x="4" y="1" width="8" height="14" fill="#a8d4f4" opacity="0.5"/><circle cx="9.5" cy="9" r="3.2" fill="none" stroke="#2a6ab0" stroke-width="1.8"/><path d="M6.8 9 H12.3" stroke="#2a6ab0" stroke-width="1.2"/><path d="M2.5 8.5 H8.5 V14.5 L6.5 12.5 L3 16 L1 14 L4.5 10.5 Z" fill="url(#garr)" stroke="#e86a00" stroke-width="1" stroke-linejoin="round"/></svg>
<svg style="left:457px;top:102px" width="16" height="16" viewBox="0 0 16 16"><path d="M3.5 0.5 H12.5 L15.5 3.5 V15.5 H3.5 Z" fill="url(#gdoc)" stroke="#1480e8" stroke-width="1"/><path d="M12.5 0.5 V3.5 H15.5" fill="#fff" stroke="#1480e8" stroke-width="1"/><path d="M8 9.5 H14" stroke="#6a90b0" stroke-width="1"/><path d="M8 11.5 H14" stroke="#6a90b0" stroke-width="1"/><path d="M8 13.5 H14" stroke="#6a90b0" stroke-width="1"/><rect x="1" y="2" width="13" height="7" fill="#0a8a10"/><rect x="2" y="3" width="1" height="1" fill="#fff"/><rect x="3" y="3" width="1" height="1" fill="#fff"/><rect x="4" y="3" width="1" height="1" fill="#fff"/><rect x="2" y="4" width="1" height="1" fill="#fff"/><rect x="2" y="5" width="1" height="1" fill="#fff"/><rect x="2" y="6" width="1" height="1" fill="#fff"/><rect x="2" y="7" width="1" height="1" fill="#fff"/><rect x="3" y="7" width="1" height="1" fill="#fff"/><rect x="4" y="7" width="1" height="1" fill="#fff"/><rect x="6" y="3" width="1" height="1" fill="#fff"/><rect x="7" y="3" width="1" height="1" fill="#fff"/><rect x="8" y="3" width="1" height="1" fill="#fff"/><rect x="6" y="4" width="1" height="1" fill="#fff"/><rect x="6" y="5" width="1" height="1" fill="#fff"/><rect x="7" y="5" width="1" height="1" fill="#fff"/><rect x="8" y="5" width="1" height="1" fill="#fff"/><rect x="8" y="6" width="1" height="1" fill="#fff"/><rect x="6" y="7" width="1" height="1" fill="#fff"/><rect x="7" y="7" width="1" height="1" fill="#fff"/><rect x="8" y="7" width="1" height="1" fill="#fff"/><rect x="10" y="3" width="1" height="1" fill="#fff"/><rect x="12" y="3" width="1" height="1" fill="#fff"/><rect x="10" y="4" width="1" height="1" fill="#fff"/><rect x="12" y="4" width="1" height="1" fill="#fff"/><rect x="10" y="5" width="1" height="1" fill="#fff"/><rect x="12" y="5" width="1" height="1" fill="#fff"/><rect x="10" y="6" width="1" height="1" fill="#fff"/><rect x="12" y="6" width="1" height="1" fill="#fff"/><rect x="11" y="7" width="1" height="1" fill="#fff"/><path d="M2.5 8.5 H8.5 V14.5 L6.5 12.5 L3 16 L1 14 L4.5 10.5 Z" fill="url(#garr)" stroke="#e86a00" stroke-width="1" stroke-linejoin="round"/></svg>
<svg style="left:480px;top:102px" width="16" height="16" viewBox="0 0 16 16"><path d="M3.5 0.5 H12.5 L15.5 3.5 V15.5 H3.5 Z" fill="url(#gdoc)" stroke="#1480e8" stroke-width="1"/><path d="M12.5 0.5 V3.5 H15.5" fill="#fff" stroke="#1480e8" stroke-width="1"/><path d="M8 9.5 H14" stroke="#6a90b0" stroke-width="1"/><path d="M8 11.5 H14" stroke="#6a90b0" stroke-width="1"/><path d="M8 13.5 H14" stroke="#6a90b0" stroke-width="1"/><rect x="0" y="2" width="13" height="7" fill="#0a8a10"/><rect x="1" y="3" width="1" height="1" fill="#fff"/><rect x="2" y="3" width="1" height="1" fill="#fff"/><rect x="3" y="3" width="1" height="1" fill="#fff"/><rect x="2" y="4" width="1" height="1" fill="#fff"/><rect x="2" y="5" width="1" height="1" fill="#fff"/><rect x="2" y="6" width="1" height="1" fill="#fff"/><rect x="2" y="7" width="1" height="1" fill="#fff"/><rect x="5" y="3" width="1" height="1" fill="#fff"/><rect x="7" y="3" width="1" height="1" fill="#fff"/><rect x="5" y="4" width="1" height="1" fill="#fff"/><rect x="7" y="4" width="1" height="1" fill="#fff"/><rect x="6" y="5" width="1" height="1" fill="#fff"/><rect x="5" y="6" width="1" height="1" fill="#fff"/><rect x="7" y="6" width="1" height="1" fill="#fff"/><rect x="5" y="7" width="1" height="1" fill="#fff"/><rect x="7" y="7" width="1" height="1" fill="#fff"/><rect x="9" y="3" width="1" height="1" fill="#fff"/><rect x="10" y="3" width="1" height="1" fill="#fff"/><rect x="11" y="3" width="1" height="1" fill="#fff"/><rect x="10" y="4" width="1" height="1" fill="#fff"/><rect x="10" y="5" width="1" height="1" fill="#fff"/><rect x="10" y="6" width="1" height="1" fill="#fff"/><rect x="10" y="7" width="1" height="1" fill="#fff"/><path d="M2.5 8.5 H8.5 V14.5 L6.5 12.5 L3 16 L1 14 L4.5 10.5 Z" fill="url(#garr)" stroke="#e86a00" stroke-width="1" stroke-linejoin="round"/></svg>
<svg style="left:503px;top:102px" width="16" height="16" viewBox="0 0 16 16"><path d="M3.5 0.5 H12.5 L15.5 3.5 V15.5 H3.5 Z" fill="url(#gdoc)" stroke="#1480e8" stroke-width="1"/><path d="M12.5 0.5 V3.5 H15.5" fill="#fff" stroke="#1480e8" stroke-width="1"/><path d="M8 9.5 H14" stroke="#6a90b0" stroke-width="1"/><path d="M8 11.5 H14" stroke="#6a90b0" stroke-width="1"/><path d="M8 13.5 H14" stroke="#6a90b0" stroke-width="1"/><rect x="0" y="2" width="13" height="7" fill="#0a8a10"/><rect x="1" y="3" width="1" height="1" fill="#fff"/><rect x="3" y="3" width="1" height="1" fill="#fff"/><rect x="1" y="4" width="1" height="1" fill="#fff"/><rect x="3" y="4" width="1" height="1" fill="#fff"/><rect x="2" y="5" width="1" height="1" fill="#fff"/><rect x="1" y="6" width="1" height="1" fill="#fff"/><rect x="3" y="6" width="1" height="1" fill="#fff"/><rect x="1" y="7" width="1" height="1" fill="#fff"/><rect x="3" y="7" width="1" height="1" fill="#fff"/><rect x="5" y="3" width="1" height="1" fill="#fff"/><rect x="7" y="3" width="1" height="1" fill="#fff"/><rect x="5" y="4" width="1" height="1" fill="#fff"/><rect x="6" y="4" width="1" height="1" fill="#fff"/><rect x="7" y="4" width="1" height="1" fill="#fff"/><rect x="5" y="5" width="1" height="1" fill="#fff"/><rect x="6" y="5" width="1" height="1" fill="#fff"/><rect x="7" y="5" width="1" height="1" fill="#fff"/><rect x="5" y="6" width="1" height="1" fill="#fff"/><rect x="7" y="6" width="1" height="1" fill="#fff"/><rect x="5" y="7" width="1" height="1" fill="#fff"/><rect x="7" y="7" width="1" height="1" fill="#fff"/><rect x="9" y="3" width="1" height="1" fill="#fff"/><rect x="9" y="4" width="1" height="1" fill="#fff"/><rect x="9" y="5" width="1" height="1" fill="#fff"/><rect x="9" y="6" width="1" height="1" fill="#fff"/><rect x="9" y="7" width="1" height="1" fill="#fff"/><rect x="10" y="7" width="1" height="1" fill="#fff"/><rect x="11" y="7" width="1" height="1" fill="#fff"/><path d="M2.5 8.5 H8.5 V14.5 L6.5 12.5 L3 16 L1 14 L4.5 10.5 Z" fill="url(#garr)" stroke="#e86a00" stroke-width="1" stroke-linejoin="round"/></svg>
<svg style="left:526px;top:102px" width="16" height="16" viewBox="0 0 16 16"><path d="M0.5 0 V15.5 H16" stroke="#333" stroke-width="1" fill="none"/><rect x="3" y="0.5" width="4" height="14.5" fill="#b0109a" stroke="#800070" stroke-width="0.6"/><rect x="4.2" y="1.5" width="1.2" height="12" fill="#f8b0f0"/><rect x="7" y="7" width="4" height="8" fill="#f8a820"/><rect x="11" y="4" width="4" height="11" fill="#10a018" stroke="#0a7010" stroke-width="0.6"/><rect x="12" y="5" width="1.2" height="9" fill="#8ef088"/></svg>
<svg style="left:557px;top:102px" width="16" height="16" viewBox="0 0 16 16"><rect x="6.5" y="0.5" width="9" height="15" fill="#fff" stroke="#888" stroke-width="1"/><rect x="6" y="0" width="10" height="2" fill="#3a90d8"/><rect x="8" y="3" width="5" height="11" fill="#d6ecfb"/><path d="M9 4.5 H12" stroke="#8a8a8a"/><path d="M9 6.5 H12" stroke="#8a8a8a"/><path d="M9 8.5 H12" stroke="#8a8a8a"/><path d="M9 10.5 H12" stroke="#8a8a8a"/><path d="M9 12.5 H12" stroke="#8a8a8a"/><circle cx="3.8" cy="12.2" r="3.6" fill="#18c018" stroke="#0a7a0a" stroke-width="1"/><path d="M1.5999999999999996 12.2 H6.0 M3.8 10.0 V14.399999999999999" stroke="#fff" stroke-width="1.4"/></svg>
<svg style="left:580px;top:102px" width="16" height="16" viewBox="0 0 16 16"><rect x="1.5" y="0.5" width="9" height="15" fill="#fff" stroke="#888" stroke-width="1"/><rect x="1" y="0" width="10" height="2" fill="#3a90d8"/><rect x="3" y="3" width="5" height="11" fill="#d6ecfb"/><path d="M4 4.5 H7" stroke="#8a8a8a"/><path d="M4 6.5 H7" stroke="#8a8a8a"/><path d="M4 8.5 H7" stroke="#8a8a8a"/><path d="M4 10.5 H7" stroke="#8a8a8a"/><path d="M4 12.5 H7" stroke="#8a8a8a"/><polygon points="15.81,11.33 15.81,13.07 14.21,13.22 14.14,13.40 15.17,14.63 13.93,15.87 12.70,14.84 12.52,14.91 12.37,16.51 10.63,16.51 10.48,14.91 10.30,14.84 9.07,15.87 7.83,14.63 8.86,13.40 8.79,13.22 7.19,13.07 7.19,11.33 8.79,11.18 8.86,11.00 7.83,9.77 9.07,8.53 10.30,9.56 10.48,9.49 10.63,7.89 12.37,7.89 12.52,9.49 12.70,9.56 13.93,8.53 15.17,9.77 14.14,11.00 14.21,11.18" fill="#f59a10" stroke="#d86a00" stroke-width="0.6"/><circle cx="11.5" cy="12.2" r="1.7" fill="#fff4d8" stroke="#c86000" stroke-width="0.6"/></svg>
<svg style="left:603px;top:102px" width="16" height="16" viewBox="0 0 16 16"><rect x="0.5" y="0.5" width="15" height="12" fill="#d6ecfb" stroke="#1470e0" stroke-width="1"/><rect x="0" y="0" width="16" height="2" fill="#3a90e8"/><path d="M1 5.5 H15 M1 8.5 H15 M5.5 2 V12 M9.5 2 V12" stroke="#5a7a98" stroke-width="1"/><polygon points="15.81,11.43 15.81,13.17 14.21,13.32 14.14,13.50 15.17,14.73 13.93,15.97 12.70,14.94 12.52,15.01 12.37,16.61 10.63,16.61 10.48,15.01 10.30,14.94 9.07,15.97 7.83,14.73 8.86,13.50 8.79,13.32 7.19,13.17 7.19,11.43 8.79,11.28 8.86,11.10 7.83,9.87 9.07,8.63 10.30,9.66 10.48,9.59 10.63,7.99 12.37,7.99 12.52,9.59 12.70,9.66 13.93,8.63 15.17,9.87 14.14,11.10 14.21,11.28" fill="#f59a10" stroke="#d86a00" stroke-width="0.6"/><circle cx="11.5" cy="12.3" r="1.7" fill="#fff4d8" stroke="#c86000" stroke-width="0.6"/></svg>
<svg style="left:626px;top:102px" width="16" height="16" viewBox="0 0 16 16"><rect x="0.5" y="0.5" width="5" height="11" fill="#fff" stroke="#f08a10"/><rect x="10.5" y="0.5" width="5" height="11" fill="#fff" stroke="#a0108a"/><rect x="4.5" y="0.5" width="7" height="12" fill="#e8fafa" stroke="#10c0c8"/><path d="M6 3.5 H10" stroke="#2a8a8a"/><path d="M6 5.5 H10" stroke="#2a8a8a"/><path d="M6 7.5 H10" stroke="#2a8a8a"/><path d="M6 9.5 H10" stroke="#2a8a8a"/><polygon points="15.81,11.43 15.81,13.17 14.21,13.32 14.14,13.50 15.17,14.73 13.93,15.97 12.70,14.94 12.52,15.01 12.37,16.61 10.63,16.61 10.48,15.01 10.30,14.94 9.07,15.97 7.83,14.73 8.86,13.50 8.79,13.32 7.19,13.17 7.19,11.43 8.79,11.28 8.86,11.10 7.83,9.87 9.07,8.63 10.30,9.66 10.48,9.59 10.63,7.99 12.37,7.99 12.52,9.59 12.70,9.66 13.93,8.63 15.17,9.87 14.14,11.10 14.21,11.28" fill="#f59a10" stroke="#d86a00" stroke-width="0.6"/><circle cx="11.5" cy="12.3" r="1.7" fill="#fff4d8" stroke="#c86000" stroke-width="0.6"/></svg>
<svg style="left:657px;top:102px" width="16" height="16" viewBox="0 0 16 16"><rect x="0" y="0.5" width="2" height="15" fill="#0a64c8"/><path d="M15.5 0.5 V15.5 L3.5 8 Z" fill="url(#gnav)" stroke="#0a5cb8" stroke-width="1.3" stroke-linejoin="round"/></svg>
<svg style="left:680px;top:102px" width="16" height="16" viewBox="0 0 16 16"><path d="M14.5 0.5 V15.5 L2.5 8 Z" fill="url(#gnav)" stroke="#0a5cb8" stroke-width="1.3" stroke-linejoin="round"/></svg>
<svg style="left:703px;top:102px" width="16" height="16" viewBox="0 0 16 16"><path d="M1.5 0.5 V15.5 L13.5 8 Z" fill="url(#gnav)" stroke="#0a5cb8" stroke-width="1.3" stroke-linejoin="round"/></svg>
<svg style="left:726px;top:102px" width="16" height="16" viewBox="0 0 16 16"><rect x="14" y="0.5" width="2" height="15" fill="#0a64c8"/><path d="M0.5 0.5 V15.5 L12.5 8 Z" fill="url(#gnav)" stroke="#0a5cb8" stroke-width="1.3" stroke-linejoin="round"/></svg>
<svg style="left:26px;top:153px" width="9" height="9" viewBox="0 0 9 9"><rect x="0.5" y="0.5" width="8" height="8" fill="#fff" stroke="#808080"/><path d="M2 4.5 H7" stroke="#000"/></svg>
<div class="a" style="left:35px;top:157px;width:7px;height:1px;background:repeating-linear-gradient(90deg,#808080 0 1px,transparent 1px 2px)"></div>
<div class="a" style="left:50px;top:163px;width:1px;height:43px;background:repeating-linear-gradient(#808080 0 1px,transparent 1px 2px)"></div>
<div class="a" style="left:51px;top:173px;width:11px;height:1px;background:repeating-linear-gradient(90deg,transparent 0 1px,#808080 1px 2px)"></div>
<div class="a" style="left:51px;top:189px;width:11px;height:1px;background:repeating-linear-gradient(90deg,transparent 0 1px,#808080 1px 2px)"></div>
<div class="a" style="left:51px;top:205px;width:11px;height:1px;background:repeating-linear-gradient(90deg,transparent 0 1px,#808080 1px 2px)"></div>
<svg style="left:42px;top:149px" width="16" height="14" viewBox="0 0 16 14"><path d="M0.5 2.5 L2 1 H6 L7 2 H13.5 V12.5 H0.5 Z" fill="#f6e08a" stroke="#8a7a10" stroke-width="1"/><path d="M2.5 5.5 H15.5 L13.5 12.5 H0.5 Z" fill="#fff2b0" stroke="#8a7a10" stroke-width="1"/><path d="M13.5 12.5 L15.5 5.5 V12.5 Z" fill="#222"/></svg>
<div class="a" style="left:61px;top:150px;width:23px;height:15px;background:#f0f0f0"></div>
<div class="t" style="left:63.8px;top:150px;letter-spacing:0.4px">Все</div>
<svg style="left:62px;top:166px" width="16" height="13" viewBox="0 0 16 13"><path d="M0.5 1.5 L1.5 0.5 H6 L7 1.5 H14.5 V11.5 H0.5 Z" fill="#fde8a0" stroke="#8a7a10" stroke-width="1"/><path d="M14.5 2 V12.5 H1.5" fill="none" stroke="#222" stroke-width="1"/></svg>
<div class="t" style="left:83.8px;top:167px;letter-spacing:0">Водоем <span style="letter-spacing:-1px">№</span>1</div>
<svg style="left:62px;top:182px" width="16" height="13" viewBox="0 0 16 13"><path d="M0.5 1.5 L1.5 0.5 H6 L7 1.5 H14.5 V11.5 H0.5 Z" fill="#fde8a0" stroke="#8a7a10" stroke-width="1"/><path d="M14.5 2 V12.5 H1.5" fill="none" stroke="#222" stroke-width="1"/></svg>
<div class="t" style="left:83.8px;top:183px;letter-spacing:0">Водоем <span style="letter-spacing:-1px">№</span>2</div>
<svg style="left:62px;top:198px" width="16" height="13" viewBox="0 0 16 13"><path d="M0.5 1.5 L1.5 0.5 H6 L7 1.5 H14.5 V11.5 H0.5 Z" fill="#fde8a0" stroke="#8a7a10" stroke-width="1"/><path d="M14.5 2 V12.5 H1.5" fill="none" stroke="#222" stroke-width="1"/></svg>
<div class="t" style="left:83.8px;top:199px;letter-spacing:0">Водоем <span style="letter-spacing:-1px">№</span>3</div></body></html>
